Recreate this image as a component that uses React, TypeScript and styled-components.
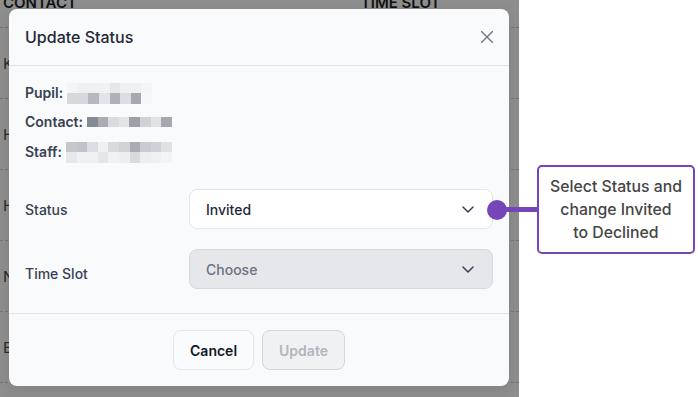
import * as React from 'react';
import styled, {createGlobalStyle} from 'styled-components';

const GlobalStyle = createGlobalStyle`
    html, body {
        margin: 0;
        padding: 0;
        background: #ffffff;
    }
    body {
        font-family: Inter, "Noto Sans", "Liberation Sans", sans-serif;
        -webkit-font-smoothing: antialiased;
    }
`;

const PURPLE = '#7646b8';

const Stage = styled.div`
    position: relative;
    width: 698px;
    height: 397px;
    overflow: hidden;
    display: flex;
    background: #ffffff;
`;

const Backdrop = styled.div`
    width: 519px;
    height: 397px;
    background: #8e8e8e;
    display: flex;
    flex-direction: column;
    overflow: hidden;
`;

const TableHead = styled.div`
    display: flex;
    height: 28px;
    flex-shrink: 0;
    border-bottom: 1px dashed #747474;
    box-sizing: border-box;
    font-weight: 600;
    font-size: 15px;
    color: #121212;
    line-height: 16px;
`;

const HeadCell = styled.div<{ $width: number }>`
    width: ${p => p.$width}px;
    padding-left: 3px;
    margin-top: -5px;
    text-transform: uppercase;
`;

const TableRow = styled.div`
    height: 71px;
    flex-shrink: 0;
    box-sizing: border-box;
    border-bottom: 1px dashed #747474;
    display: flex;
    align-items: center;
    padding-left: 3px;
    font-size: 15px;
    color: #2a2a2a;
`;

const Modal = styled.div`
    position: absolute;
    left: 9px;
    top: 9px;
    width: 500px;
    height: 377px;
    background: #f9fafb;
    border-radius: 8px;
    display: flex;
    flex-direction: column;
    box-shadow: 0 4px 16px #00000018;
    overflow: hidden;
`;

const ModalHeader = styled.div`
    height: 56px;
    flex-shrink: 0;
    display: flex;
    align-items: center;
    justify-content: space-between;
    padding: 0 16px;
    border-bottom: 1px solid #e2e4e8;
`;

const Title = styled.h3`
    margin: 0;
    font-size: 16px;
    font-weight: 500;
    color: #1f2937;
`;

const CloseButton = styled.button`
    border: none;
    background: transparent;
    padding: 0;
    width: 12px;
    height: 12px;
    display: flex;
    cursor: pointer;
`;

const ModalBody = styled.div`
    flex: 1;
    padding: 16px 16px 24px;
    display: flex;
    flex-direction: column;
`;

const InfoList = styled.div`
    display: flex;
    flex-direction: column;
    gap: 9.5px;
`;

const InfoRow = styled.div`
    display: flex;
    align-items: center;
    height: 20px;
    font-size: 14px;
    font-weight: 600;
    color: #374151;
`;

const InfoLabel = styled.span`
    margin-right: 4px;
`;

const Pixels = styled.div<{ $cols: number; $cell: number; $rowH: number }>`
    display: grid;
    grid-template-columns: repeat(${p => p.$cols}, ${p => p.$cell}px);
    grid-auto-rows: ${p => p.$rowH}px;
    margin-top: ${p => (p.$rowH > 10 ? 2 : 0)}px;
`;

const Pixel = styled.span<{ $color: string }>`
    background: ${p => p.$color};
`;

const FormGrid = styled.div`
    margin-top: 28px;
    display: grid;
    grid-template-columns: 164px 1fr;
    row-gap: 20px;
    align-items: center;
`;

const FieldLabel = styled.label<{ $shift?: number }>`
    font-size: 14px;
    font-weight: 500;
    color: #374151;
    padding-top: ${p => p.$shift ?? 0}px;
`;

const SelectBox = styled.div<{ $disabled?: boolean }>`
    height: 40px;
    box-sizing: border-box;
    border-radius: 8px;
    border: 1px solid ${p => (p.$disabled ? '#d5d8dd' : '#e3e5e9')};
    background: ${p => (p.$disabled ? '#e5e7eb' : '#ffffff')};
    display: flex;
    align-items: center;
    justify-content: space-between;
    padding: 0 18px 0 16px;
    font-size: 14px;
    font-weight: 500;
    color: ${p => (p.$disabled ? '#6b7280' : '#1f2937')};
`;

const ModalFooter = styled.div`
    height: 73px;
    flex-shrink: 0;
    border-top: 1px solid #e2e4e8;
    box-sizing: border-box;
    display: flex;
    justify-content: center;
    gap: 8px;
    padding-top: 16px;
`;

const Button = styled.button<{ $disabled?: boolean }>`
    height: 40px;
    padding: 0 16px;
    border-radius: 8px;
    font-family: inherit;
    font-size: 14px;
    font-weight: 600;
    border: 1px solid ${p => (p.$disabled ? '#d4d6db' : '#e4e6ea')};
    background: ${p => (p.$disabled ? '#f0f1f3' : '#fafbfc')};
    color: ${p => (p.$disabled ? '#b2b6bd' : '#111827')};
    cursor: ${p => (p.$disabled ? 'default' : 'pointer')};
`;

const Callout = styled.div`
    position: absolute;
    left: 487px;
    top: 165px;
    display: flex;
    align-items: center;
`;

const CalloutDot = styled.span`
    width: 20px;
    height: 20px;
    border-radius: 50%;
    background: ${PURPLE};
    flex-shrink: 0;
`;

const CalloutLine = styled.span`
    width: 32px;
    height: 5px;
    margin-left: -2px;
    background: ${PURPLE};
`;

const CalloutBox = styled.div`
    width: 158px;
    height: 89px;
    box-sizing: border-box;
    border: 2px solid ${PURPLE};
    border-radius: 5px;
    background: #ffffff;
    display: flex;
    align-items: center;
    justify-content: center;
    text-align: center;
    font-size: 15.8px;
    font-weight: 500;
    line-height: 23px;
    color: #454545;
`;

const pupilCells = [
    '#f3f4f6', '#eef0f2', '#eef0f2', '#f0f1f3', '#e5e7ea', '#eef0f2', '#eef0f2', '#f4f5f7',
    '#d6d8dc', '#d6d8dc', '#b5b8bd', '#e1e3e6', '#aeb1b6', '#dcdee1', '#a6a9af', '#f6f7f8',
];
const contactCells = [
    '#868a92', '#a9acb2', '#d9dbdf', '#e2e4e7', '#9da0a7', '#d0d2d6', '#e0e2e5', '#a5a8ae',
];
const staffCells = [
    '#c5c7cc', '#c0c3c8', '#dcdee1', '#eef0f2', '#d8dade', '#d0d2d6', '#a9acb2', '#c9cbd0', '#cfd1d5', '#dfe1e4',
    '#e6e8eb', '#eef0f2', '#eef0f2', '#e4e6e9', '#f0f1f3', '#eceef0', '#d8dade', '#eceef0', '#eef0f2', '#f3f4f6',
];

const rows = ['Kenny Hart', 'Holly Jones', 'Harry Smith', 'Nina Patel', 'Ellis Brown', 'Fay Green'];

function Blurred({cells, cols, rowH}: { cells: string[]; cols: number; rowH: number }) {
    return (
        <Pixels $cols={cols} $cell={10.6} $rowH={rowH}>
            {cells.map((c, i) => <Pixel key={i} $color={c}/>)}
        </Pixels>
    );
}

function Chevron() {
    return (
        <svg width="12" height="7" viewBox="0 0 12 7" fill="none">
            <path d="M1 1l5 5 5-5" stroke="#374151" strokeWidth="1.5" strokeLinecap="round" strokeLinejoin="round"/>
        </svg>
    );
}

export default function App() {
    return (
        <Stage>
            <GlobalStyle/>
            <Backdrop>
                <TableHead>
                    <HeadCell $width={359}>Contact</HeadCell>
                    <HeadCell $width={160}>Time Slot</HeadCell>
                </TableHead>
                {rows.map(name => <TableRow key={name}>{name}</TableRow>)}
            </Backdrop>

            <Modal>
                <ModalHeader>
                    <Title>Update Status</Title>
                    <CloseButton aria-label="Close">
                        <svg width="12" height="12" viewBox="0 0 12 12" fill="none">
                            <path d="M0.5 0.5l11 11M11.5 0.5l-11 11" stroke="#6b7280" strokeWidth="1.4" strokeLinecap="round"/>
                        </svg>
                    </CloseButton>
                </ModalHeader>
                <ModalBody>
                    <InfoList>
                        <InfoRow>
                            <InfoLabel>Pupil:</InfoLabel>
                            <Blurred cells={pupilCells} cols={8} rowH={10.5}/>
                        </InfoRow>
                        <InfoRow>
                            <InfoLabel>Contact:</InfoLabel>
                            <Blurred cells={contactCells} cols={8} rowH={10}/>
                        </InfoRow>
                        <InfoRow>
                            <InfoLabel>Staff:</InfoLabel>
                            <Blurred cells={staffCells} cols={10} rowH={10.5}/>
                        </InfoRow>
                    </InfoList>
                    <FormGrid>
                        <FieldLabel>Status</FieldLabel>
                        <SelectBox>
                            <span>Invited</span>
                            <Chevron/>
                        </SelectBox>
                        <FieldLabel $shift={8}>Time Slot</FieldLabel>
                        <SelectBox $disabled>
                            <span>Choose</span>
                            <Chevron/>
                        </SelectBox>
                    </FormGrid>
                </ModalBody>
                <ModalFooter>
                    <Button>Cancel</Button>
                    <Button $disabled disabled>Update</Button>
                </ModalFooter>
            </Modal>

            <Callout>
                <CalloutDot/>
                <CalloutLine/>
                <CalloutBox>
                    Select Status and<br/>change Invited<br/>to Declined
                </CalloutBox>
            </Callout>
        </Stage>
    );
}
